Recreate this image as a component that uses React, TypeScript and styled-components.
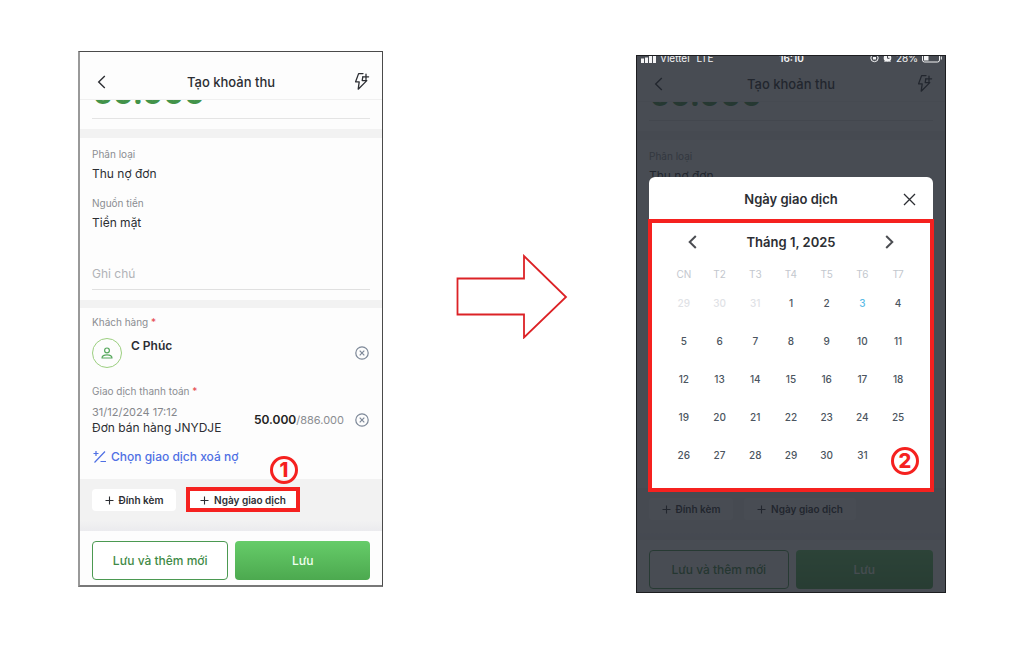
import React from "react";
import styled, { createGlobalStyle, css } from "styled-components";

const GlobalStyle = createGlobalStyle`
  * { box-sizing: border-box; }
  body { margin: 0; background: #fff; font-family: Inter, "Liberation Sans", sans-serif; color: #2c2e33; }
  button, input { font-family: inherit; }
`;

const Page = styled.main`
  display: grid;
  grid-template-columns: minmax(0, 305fr) minmax(0, 253fr) minmax(0, 310fr);
  align-items: start;
  padding: 51px 78px;
`;

const Phone = styled.section<{ $dimmed?: boolean }>`
  position: relative;
  display: flex;
  flex-direction: column;
  overflow: hidden;
  background: #fdfdfd;
  border: 1px solid #4a4a4a;
  ${(p) =>
    p.$dimmed
      ? css`
          min-height: 538px;
          margin-top: 4px;
          border-color: #1c1d20;
        `
      : css`
          border-left: 2px solid #999;
          border-bottom: 2px solid #777;
        `}
`;

const Header = styled.header<{ $compact?: boolean }>`
  display: grid;
  grid-template-columns: 24px 1fr 24px;
  align-items: center;
  justify-items: center;
  height: ${(p) => (p.$compact ? 46 : 48)}px;
  padding: ${(p) => (p.$compact ? 10 : 12)}px 9px 0;
  border-bottom: 1px solid #f0f0f0;
`;

const Title = styled.h2`
  margin: 0;
  font-size: 13px;
  line-height: 16px;
  font-weight: 500;
`;

const IconButton = styled.button`
  display: flex;
  padding: 0;
  border: 0;
  background: none;
  color: #2c2e33;
  cursor: pointer;
`;

const Section = styled.div<{ $grow?: boolean }>`
  display: flex;
  flex-direction: column;
  padding: 8px 12px 10px;
  ${(p) => p.$grow && "flex: 1;"}
`;

const AmountSection = styled(Section)`
  padding-top: 0;
`;

const Amount = styled.div`
  display: flex;
  align-items: flex-end;
  height: 19px;
  padding: 0 1px 13px;
  overflow: hidden;
  border-bottom: 1px solid #e4e4e4;
  color: #43934a;
  font-size: 31px;
  line-height: 24px;
  font-weight: 700;
`;

const Band = styled.div<{ $thin?: boolean }>`
  height: ${(p) => (p.$thin ? 8 : 9)}px;
  background: #f2f2f2;
`;

const Label = styled.div`
  font-size: 10px;
  line-height: 16px;
  color: #8b8d92;
`;

const Required = styled.span`
  color: #e5484d;
`;

const Value = styled.div`
  font-size: 12px;
  line-height: 24px;
`;

const Fields = styled.div`
  display: grid;
  gap: 9px;
`;

const NoteInput = styled.input`
  width: 100%;
  height: 33px;
  margin-top: 22px;
  padding: 0;
  border: 0;
  border-bottom: 1px solid #e0e0e0;
  background: none;
  font-size: 12px;
  &::placeholder { color: #b1b3b7; opacity: 1; }
`;

const CustomerSection = styled(Section)`
  padding: 6px 12px 14px;
`;

const Row = styled.div`
  display: flex;
  align-items: center;
  padding-right: 1px;
`;

const CustomerRow = styled(Row)`
  margin: 8px 0 15px;
`;

const PaymentRow = styled(Row)`
  margin: 5px 0 13px;
`;

const Avatar = styled.div`
  display: grid;
  place-items: center;
  width: 30px;
  height: 30px;
  border: 1px solid #9ccf80;
  border-radius: 50%;
`;

const CustomerName = styled.div`
  flex: 1;
  align-self: flex-start;
  padding-left: 9px;
  font-size: 12px;
  line-height: 16px;
  font-weight: 600;
`;

const Order = styled.div`
  flex: 1;
  font-size: 12px;
  line-height: 16px;
`;

const OrderDate = styled.div`
  font-size: 11px;
  color: #85878c;
`;

const Paid = styled.div`
  padding-right: 11px;
  font-size: 11px;
  line-height: 16px;
  color: #8b8d92;
  strong { font-size: 12px; font-weight: 600; color: #222; }
`;

const DebtLink = styled.a`
  display: flex;
  align-items: center;
  gap: 4px;
  padding-left: 1px;
  font-size: 12px;
  line-height: 16px;
  font-weight: 500;
  color: #4f70e4;
  text-decoration: none;
`;

const Chips = styled.div`
  display: flex;
  align-items: flex-start;
  gap: 11px;
  height: 52px;
  padding: 10px 12px;
  background: linear-gradient(#f2f2f2 80%, #ebebee);
`;

const ChipSlot = styled.div`
  position: relative;
`;

const Chip = styled.button<{ $wide?: boolean }>`
  display: flex;
  align-items: center;
  justify-content: center;
  gap: 5px;
  width: ${(p) => (p.$wide ? 112 : 84)}px;
  height: 22px;
  padding: 0;
  border: 0;
  border-radius: 4px;
  background: #fff;
  color: #2c2e33;
  font-size: 10px;
  font-weight: 600;
  white-space: nowrap;
  cursor: pointer;
`;

const ChipMark = styled.div`
  position: absolute;
  inset: -2px -1px -1px;
  border: 4px solid #f5211f;
  pointer-events: none;
`;

const Footer = styled.footer<{ $compact?: boolean }>`
  display: grid;
  grid-template-columns: 137fr 135fr;
  gap: 7px;
  padding: 10px 12px ${(p) => (p.$compact ? 3 : 5)}px;
`;

const ActionButton = styled.button<{ $primary?: boolean }>`
  height: 39px;
  padding: 0;
  border: 1px solid #4b9951;
  border-radius: 4px;
  background: #fff;
  color: #3f8a46;
  font-size: 12px;
  font-weight: 500;
  cursor: pointer;
  ${(p) =>
    p.$primary &&
    css`
      border: 0;
      background: linear-gradient(#66cc69, #4ca94f);
      color: #f0fff0;
    `}
`;

const StepBadge = styled.div<{ $right: number; $bottom: number }>`
  position: absolute;
  right: ${(p) => p.$right}px;
  bottom: ${(p) => p.$bottom}px;
  display: grid;
  place-items: center;
  width: 28px;
  height: 28px;
  border: 3px solid #f5211f;
  border-radius: 50%;
  color: #f5211f;
  font-size: 20px;
  line-height: 20px;
  font-weight: 800;
`;

const ArrowCell = styled.div`
  display: flex;
  justify-content: center;
  padding: 203px 0 0 5px;
`;

const Overlay = styled.div`
  position: absolute;
  inset: 0;
  background: rgba(32, 36, 45, 0.82);
`;

const StatusBar = styled.div`
  display: grid;
  grid-template-columns: 1fr auto 1fr;
  grid-template-rows: 8px;
  align-items: end;
  padding: 0 3px 0 4px;
  overflow: hidden;
  color: #f4f4f5;
  font-size: 10px;
  line-height: 12px;
`;

const StatusGroup = styled.div<{ $end?: boolean }>`
  display: flex;
  align-items: center;
  gap: 4px;
  justify-content: ${(p) => (p.$end ? "flex-end" : "flex-start")};
`;

const Clock = styled.div`
  font-weight: 600;
`;

const Dialog = styled.div`
  margin: 113px 11px 0;
`;

const DialogHeader = styled.div`
  display: grid;
  grid-template-columns: 24px 1fr 24px;
  align-items: center;
  justify-items: center;
  height: 42px;
  margin: 0 1px;
  padding: 2px 12px 0;
  border-radius: 6px 6px 0 0;
  background: #fff;
`;

const DialogTitle = styled.h3`
  grid-column: 2;
  margin: 0;
  font-size: 13px;
  line-height: 16px;
  font-weight: 600;
`;

const Calendar = styled.div`
  position: relative;
  padding: 0 14px 14px;
  border: 4px solid #f5211f;
  background: #fff;
`;

const MonthNav = styled.div`
  display: flex;
  align-items: center;
  justify-content: space-between;
  height: 38px;
  padding: 0 22px;
`;

const Month = styled.div`
  font-size: 13px;
  line-height: 16px;
  font-weight: 600;
`;

const Days = styled.table`
  width: 100%;
  table-layout: fixed;
  border-collapse: collapse;
  th {
    height: 23px;
    padding: 3px 0 0;
    color: #c3c7ce;
    font-size: 10px;
    line-height: 16px;
    font-weight: 400;
  }
  td {
    height: 38px;
    padding: 0;
    text-align: center;
  }
`;

const Day = styled.button<{ $tone: string }>`
  width: 24px;
  height: 24px;
  padding: 0;
  border: 0;
  background: none;
  color: ${(p) => p.$tone};
  font-size: 10px;
  font-weight: 500;
  cursor: pointer;
`;

const Chevron = ({ right, bold }: { right?: boolean; bold?: boolean }) => (
  <svg width="9" height="14" viewBox="0 0 9 14" fill="none" stroke={bold ? "#4b4d52" : "currentColor"} strokeWidth={bold ? 2 : 1.4}>
    <path d={right ? "M1.2 1L7.3 7L1.2 13" : "M7.8 1L1.7 7L7.8 13"} />
  </svg>
);

const BoltPlus = () => (
  <svg width="17" height="19" viewBox="0 0 17 19" fill="none" stroke="currentColor" strokeWidth="1.3" strokeLinejoin="round" strokeLinecap="round">
    <path d="M10 1.600H5.600L2.600 9.800H6.200L5.200 17.200L13.800 8.600H9.200L9.800 4.800" />
    <path d="M9.800 4.800H15.600M13 2.200V7.400" />
  </svg>
);

const Person = () => (
  <svg width="12" height="12" viewBox="0 0 12 12" fill="none" stroke="#57a85d" strokeWidth="1.2">
    <circle cx="6" cy="3.4" r="2.4" />
    <path d="M1 11C1 8.8 3 7.8 6 7.8S11 8.8 11 11Z" strokeLinejoin="round" />
  </svg>
);

const CircleX = () => (
  <svg width="14" height="14" viewBox="0 0 14 14" fill="none" stroke="#7d8898" strokeWidth="1.2">
    <circle cx="7" cy="7" r="6.2" />
    <path d="M4.7 4.7L9.3 9.3M9.3 4.7L4.7 9.3" />
  </svg>
);

const PlusMinus = () => (
  <svg width="14" height="14" viewBox="0 0 14 14" fill="none" stroke="currentColor" strokeWidth="1.2">
    <path d="M0.5 3.5H5.5M3 1V6M1.5 12.5L12 1.5M7.5 11.5H13" />
  </svg>
);

const Plus = () => (
  <svg width="9" height="9" viewBox="0 0 9 9" stroke="currentColor" strokeWidth="1.1">
    <path d="M4.5 0.5V8.5M0.5 4.5H8.5" />
  </svg>
);

const Cross = () => (
  <svg width="13" height="13" viewBox="0 0 13 13" stroke="currentColor" strokeWidth="1.3">
    <path d="M1 1L12 12M12 1L1 12" />
  </svg>
);

const Signal = () => (
  <svg width="15" height="9" viewBox="0 0 15 9" fill="currentColor">
    <path d="M0 4.500h3v4.500H0zM4 3.500h3V9H4zM8 2h3v7H8zM12 0h3v9h-3z" />
  </svg>
);

const Lock = () => (
  <svg width="9" height="10" viewBox="0 0 9 10" fill="none" stroke="currentColor">
    <circle cx="4.5" cy="5" r="3.7" />
    <path d="M3 4h3v2.5H3z" fill="currentColor" stroke="none" />
  </svg>
);

const Alarm = () => (
  <svg width="9" height="10" viewBox="0 0 9 10">
    <circle cx="4.5" cy="5" r="3.8" fill="currentColor" />
    <path d="M1.5 9L3 7.5M7.5 9L6 7.5" stroke="currentColor" />
    <path d="M4.5 3v2.3h2" fill="none" stroke="#484b53" />
  </svg>
);

const Battery = () => (
  <svg width="20" height="10" viewBox="0 0 20 10" fill="none" stroke="currentColor">
    <rect x="0.5" y="0.5" width="17" height="8.5" rx="2" />
    <path d="M2 2h4.500v5.500H2z" fill="currentColor" stroke="none" />
    <path d="M19.300 3.500v3" />
  </svg>
);

const Arrow = () => (
  <svg width="112" height="85" viewBox="0 0 112 85" fill="none" stroke="#dc2226" strokeWidth="1.8">
    <path d="M1.500 24.500H68V2L110 43L68 83.500V60.500H1.500Z" />
  </svg>
);

const FormTop = ({ compact }: { compact?: boolean }) => (
  <>
    <Header $compact={compact}>
      <IconButton aria-label="Quay lại"><Chevron /></IconButton>
      <Title>Tạo khoản thu</Title>
      <IconButton aria-label="Tạo nhanh"><BoltPlus /></IconButton>
    </Header>
    <AmountSection>
      <Amount>50.000</Amount>
    </AmountSection>
    <Band />
  </>
);

const Field = ({ label, value }: { label: string; value: string }) => (
  <div>
    <Label>{label}</Label>
    <Value>{value}</Value>
  </div>
);

const FormBottom = ({ marked }: { marked?: boolean }) => (
  <>
    <Chips>
      <Chip><Plus />Đính kèm</Chip>
      <ChipSlot>
        <Chip $wide><Plus />Ngày giao dịch</Chip>
        {marked && <ChipMark />}
        {marked && <StepBadge $right={1} $bottom={27}>1</StepBadge>}
      </ChipSlot>
    </Chips>
    <Footer $compact={!marked}>
      <ActionButton>Lưu và thêm mới</ActionButton>
      <ActionButton $primary>Lưu</ActionButton>
    </Footer>
  </>
);

const weekdays = ["CN", "T2", "T3", "T4", "T5", "T6", "T7"];
const firstWeek = [29, 30, 31, 1, 2, 3, 4];
const weeks = [firstWeek, ...[5, 12, 19, 26].map((start) => weekdays.map((_, i) => start + i))];

const dayTone = (week: number, day: number) => {
  if (week === 0 && day > 7) return "#dfe2e6";
  if (day === 3) return "#5bbbe6";
  return "#4b5560";
};

export default function App() {
  return (
    <>
      <GlobalStyle />
      <Page>
        <Phone>
          <FormTop />
          <Section>
            <Fields>
              <Field label="Phân loại" value="Thu nợ đơn" />
              <Field label="Nguồn tiền" value="Tiền mặt" />
            </Fields>
            <NoteInput aria-label="Ghi chú" placeholder="Ghi chú" />
          </Section>
          <Band $thin />
          <CustomerSection>
            <Label>Khách hàng <Required>*</Required></Label>
            <CustomerRow>
              <Avatar><Person /></Avatar>
              <CustomerName>C Phúc</CustomerName>
              <IconButton aria-label="Xoá khách hàng"><CircleX /></IconButton>
            </CustomerRow>
            <Label>Giao dịch thanh toán <Required>*</Required></Label>
            <PaymentRow>
              <Order>
                <OrderDate>31/12/2024 17:12</OrderDate>
                Đơn bán hàng JNYDJE
              </Order>
              <Paid><strong>50.000</strong>/886.000</Paid>
              <IconButton aria-label="Xoá giao dịch"><CircleX /></IconButton>
            </PaymentRow>
            <DebtLink href="#"><PlusMinus />Chọn giao dịch xoá nợ</DebtLink>
          </CustomerSection>
          <FormBottom marked />
        </Phone>

        <ArrowCell><Arrow /></ArrowCell>

        <Phone $dimmed>
          <FormTop compact />
          <Section $grow>
            <Field label="Phân loại" value="Thu nợ đơn" />
          </Section>
          <FormBottom />
          <Overlay>
            <StatusBar>
              <StatusGroup><Signal />Viettel<span>&nbsp;LTE</span></StatusGroup>
              <Clock>16:10</Clock>
              <StatusGroup $end><Lock /><Alarm />28%<Battery /></StatusGroup>
            </StatusBar>
            <Dialog role="dialog" aria-label="Ngày giao dịch">
              <DialogHeader>
                <DialogTitle>Ngày giao dịch</DialogTitle>
                <IconButton aria-label="Đóng"><Cross /></IconButton>
              </DialogHeader>
              <Calendar>
                <MonthNav>
                  <IconButton aria-label="Tháng trước"><Chevron bold /></IconButton>
                  <Month>Tháng 1, 2025</Month>
                  <IconButton aria-label="Tháng sau"><Chevron right bold /></IconButton>
                </MonthNav>
                <Days>
                  <thead>
                    <tr>{weekdays.map((d) => <th key={d} scope="col">{d}</th>)}</tr>
                  </thead>
                  <tbody>
                    {weeks.map((week, w) => (
                      <tr key={w}>
                        {week.map((day) => (
                          <td key={day}>{day <= 31 && <Day $tone={dayTone(w, day)}>{day}</Day>}</td>
                        ))}
                      </tr>
                    ))}
                  </tbody>
                </Days>
                <StepBadge $right={11} $bottom={13}>2</StepBadge>
              </Calendar>
            </Dialog>
          </Overlay>
        </Phone>
      </Page>
    </>
  );
}
